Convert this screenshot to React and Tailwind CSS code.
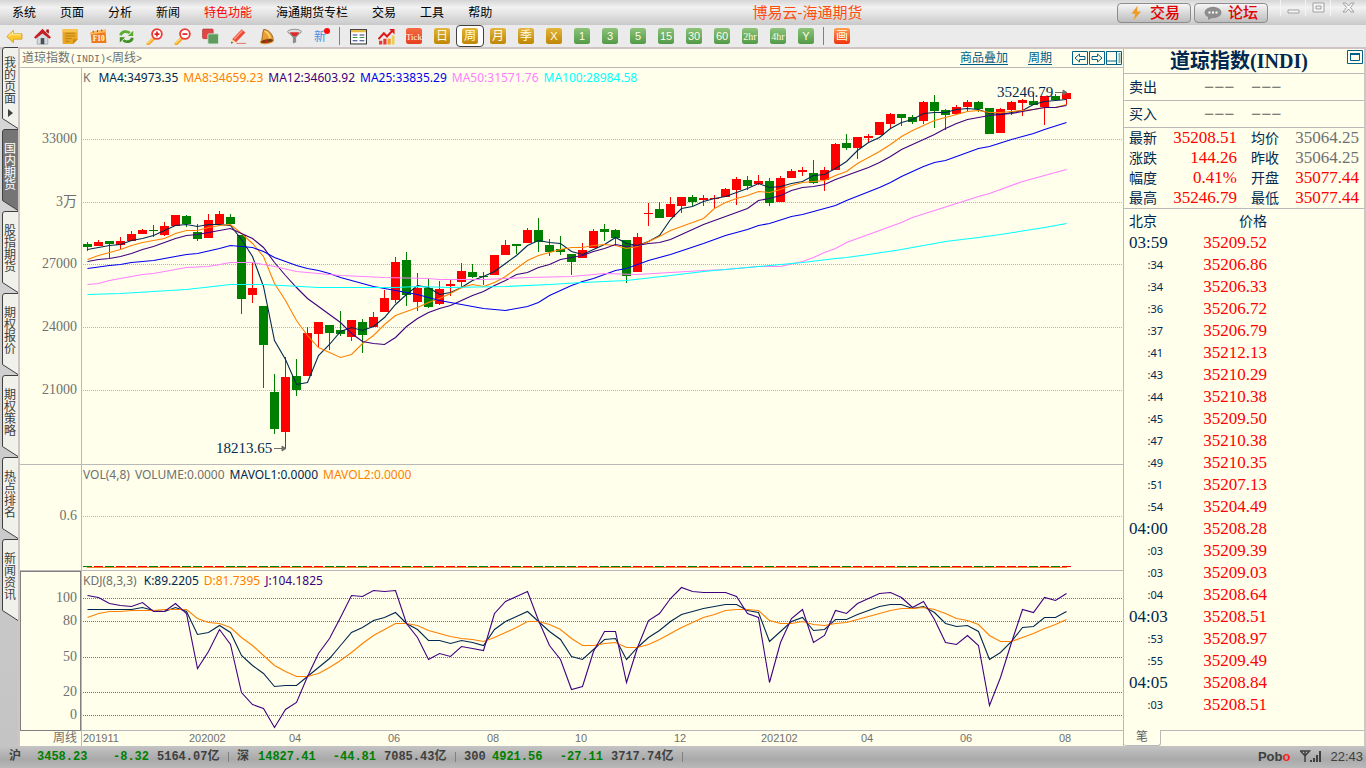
import React from "react";

const MENUS = ["系统", "页面", "分析", "新闻", "特色功能", "海通期货专栏", "交易", "工具", "帮助"];
const TABS = ["我的页面", "国内期货", "股指期货", "期权报价", "期权策略", "热点排名", "新闻资讯"];

// [up, body top, body bottom, high, low]
const CANDLES = [
  [0,244,247,242,251],[1,242,246,240,246],[0,241,244,241,258],[1,241,245,237,249],[1,234,241,231,241],
  [1,230,234,229,234],[0,230,231,225,237],[1,226,235,222,236],[1,215,226,215,226],[0,216,224,215,227],
  [0,232,239,224,241],[1,220,238,214,238],[1,214,224,211,224],[0,217,224,214,224],[0,235,299,235,314],
  [1,288,295,263,303],[0,306,345,306,388],[0,392,429,374,434],[1,377,432,357,449],[0,376,390,359,396],
  [1,333,376,327,376],[1,322,334,322,347],[0,325,333,325,350],[0,330,334,311,336],[1,320,337,320,341],
  [0,322,335,319,353],[1,317,327,312,327],[1,298,312,290,312],[1,262,300,257,303],[0,260,295,252,306],
  [1,288,302,273,311],[0,288,307,279,308],[1,289,304,281,305],[1,284,286,280,296],[1,271,282,263,287],
  [0,272,277,264,278],[0,276,277,272,285],[1,255,275,255,275],[1,245,255,240,255],[0,244,246,244,254],
  [1,230,243,228,243],[0,230,242,218,252],[0,245,252,239,256],[0,249,252,236,255],[0,254,262,254,275],
  [1,250,258,243,258],[1,231,248,229,248],[0,229,232,224,241],[0,230,238,229,245],[0,240,276,240,283],
  [1,237,272,233,272],[1,213,214,203,226],[0,209,218,202,218],[1,204,217,197,217],[1,197,206,197,213],
  [0,197,202,195,206],[1,198,200,195,206],[1,198,199,195,209],[1,189,197,188,197],[1,179,190,177,205],
  [0,180,186,176,190],[1,181,184,175,185],[0,181,203,178,206],[1,178,202,176,202],[1,171,178,169,178],
  [1,170,172,167,176],[0,173,183,160,184],[1,170,180,167,191],[1,144,170,143,170],[0,143,148,134,150],
  [1,137,148,137,159],[1,136,138,134,142],[1,122,135,122,135],[1,114,124,113,129],[0,114,118,114,126],
  [0,117,122,115,124],[1,102,121,101,124],[0,102,111,95,128],[0,110,115,109,130],[1,107,114,105,114],
  [1,102,107,100,111],[0,102,109,101,112],[0,108,134,108,134],[1,109,133,108,133],[1,102,110,101,115],
  [1,100,103,99,116],[0,101,105,95,105],[1,96,107,96,125],[0,96,100,94,100],[1,93,99,92,105],
];

const dense = (values) => values.map((y, i) => [i, y]);

const MA4 = dense([249,247,245,244,240,238,235,230,225,224,226,224,224,225,239,256,286,340,359,384,382,355,344,331,327,330,326,317,304,294,285,287,294,292,287,280,276,271,263,255,245,240,242,243,251,254,249,244,237,243,245,241,235,219,208,206,201,198,196,192,188,183,187,186,183,181,175,174,168,161,150,142,137,128,122,119,113,112,112,109,108,109,113,114,112,110,104,101,100,99]);
const MA8 = dense([259,255,252,249,245,242,240,238,233,230,230,227,225,224,233,243,256,283,300,320,335,347,352,357,354,343,335,324,315,311,307,302,298,293,287,284,286,282,276,268,260,255,252,249,247,247,245,244,245,248,246,241,236,230,226,222,218,208,202,198,195,191,192,189,185,182,181,180,175,171,163,157,151,144,136,130,125,120,117,114,111,110,112,112,111,110,109,107,107,104]);
const MA12 = dense([261,259,258,256,253,249,246,242,238,235,234,232,230,228,233,238,247,262,275,287,298,306,314,322,333,341,343,344,337,326,318,312,308,305,300,295,291,285,280,274,272,267,264,259,257,255,251,248,244,246,245,243,242,239,234,229,224,220,216,212,208,200,198,195,190,187,186,184,179,175,171,167,162,156,149,144,139,134,128,123,119,117,115,114,113,111,109,107,107,105]);
const MA25 = [[0,268],[2,265],[3,264],[4,262],[6,260],[9,254],[10,253],[12,248],[13,245],[14,246],[15,247],[16,251],[17,257],[18,261],[19,265],[20,268],[21,270],[22,273],[23,277],[25,283],[26,286],[27,288],[28,290],[29,292],[30,294],[31,297],[32,300],[34,304],[36,308],[38,310],[40,306],[41,302],[42,295],[44,285],[45,281],[46,278],[47,274],[48,270],[49,268],[51,260],[53,254],[56,243],[58,235],[60,229],[61,225],[62,223],[64,216],[65,214],[67,208],[68,205],[69,200],[72,187],[73,182],[74,176],[76,166],[77,162],[78,160],[79,156],[81,148],[82,146],[84,139],[85,136],[86,133],[87,129],[89,122]];
const MA50 = [[0,284],[1,283],[2,280],[5,274],[6,273],[9,267],[11,266],[13,262],[15,262],[17,266],[19,271],[23,275],[27,277],[31,278],[32,279],[36,279],[40,277],[44,276],[47,273],[50,274],[53,272],[56,270],[58,269],[60,267],[61,266],[63,266],[65,261],[66,257],[67,252],[68,248],[69,242],[71,234],[74,222],[75,217],[77,210],[79,203],[81,196],[82,193],[85,181],[89,169]];
const MA100 = [[0,294],[3,293],[6,291],[9,289],[13,284],[16,284],[21,287],[28,287],[30,286],[33,287],[38,286],[42,284],[45,282],[49,280],[53,275],[56,271],[60,267],[61,266],[65,262],[68,258],[69,257],[71,254],[74,249],[75,247],[78,241],[81,237],[83,234],[87,227],[89,223]];

const K_LINE = dense([609,609,609,609,609,607,610,611,607,611,634,632,625,632,655,665,673,686,685,685,676,667,658,645,632,627,620,617,612,623,629,640,640,643,640,642,645,629,621,616,611,621,631,639,656,659,649,639,638,659,647,637,630,621,614,611,608,606,604,604,610,612,641,631,621,617,630,629,619,619,614,610,606,604,604,608,606,612,623,626,625,631,659,652,641,627,626,617,617,611]);
const D_LINE = dense([617,613,611,611,610,610,610,609,609,609,618,622,623,627,637,645,655,665,671,676,676,673,667,660,652,643,635,629,623,623,625,630,633,636,638,639,641,637,632,627,621,621,624,629,638,645,645,643,642,647,647,644,639,633,627,622,617,614,610,609,609,610,620,623,623,621,624,625,623,622,619,616,613,610,608,608,607,609,613,618,620,624,635,641,641,637,633,628,624,619]);
const J_LINE = dense([595,597,603,605,606,602,611,611,603,613,668,651,629,644,692,704,708,727,709,702,676,653,638,617,595,596,590,591,590,623,637,659,653,656,646,648,650,613,601,596,591,620,645,659,689,686,651,631,631,682,647,620,613,598,587,591,592,592,592,596,613,617,682,642,618,609,642,635,610,613,603,598,593,592,597,607,601,619,642,644,635,645,705,677,642,609,612,597,600,593]);

const TICKS = [
  ["35209.52", "03:59"], ["35206.86", ":34"], ["35206.33", ":34"], ["35206.72", ":36"], ["35206.79", ":37"],
  ["35212.13", ":41"], ["35210.29", ":43"], ["35210.38", ":44"], ["35209.50", ":45"], ["35210.38", ":47"],
  ["35210.35", ":49"], ["35207.13", ":51"], ["35204.49", ":54"], ["35208.28", "04:00"], ["35209.39", ":03"],
  ["35209.03", ":03"], ["35208.64", ":04"], ["35208.51", "04:03"], ["35208.97", ":53"], ["35209.49", ":55"],
  ["35208.84", "04:05"], ["35208.51", ":03"],
];

const QUOTE = [
  ["最新", "35208.51", "均价", "35064.25", false],
  ["涨跌", "144.26", "昨收", "35064.25", false],
  ["幅度", "0.41%", "开盘", "35077.44", true],
  ["最高", "35246.79", "最低", "35077.44", true],
];

const DATES = [["201911", 83], ["202002", 189], ["04", 289], ["06", 388], ["08", 487], ["10", 575], ["12", 674], ["202102", 761], ["04", 861], ["06", 960], ["08", 1059]];

const points = (line) => line.map(([i, y]) => `${87.5 + i * 11},${y + 0.5}`).join(" ");

const Line = ({ data, color }) => (
  <polyline points={points(data)} fill="none" stroke={color} strokeWidth="1.1" />
);

const Grid = ({ ys, color }) =>
  ys.map((y) => (
    <line key={y} x1="83" x2="1123" y1={y + 0.5} y2={y + 0.5} stroke={color} strokeDasharray="1 1" shapeRendering="crispEdges" />
  ));

function Axis({ labels, top, height, boxed }) {
  return (
    <div className={boxed ? "relative border border-[#808080]" : "relative"}>
      {labels.map(([text, y]) => (
        <span
          key={text}
          className={`absolute -translate-y-1/2 font-['Liberation_Serif','Noto_Sans_CJK_SC',serif] text-sm leading-4 whitespace-nowrap text-[#707070] ${boxed ? "right-[3px]" : "right-1"}`}
          style={{ top: `${((y - top) / height) * 100}%` }}
        >
          {text}
        </span>
      ))}
    </div>
  );
}

function Legend({ items }) {
  return (
    <div className="absolute top-0.5 left-px flex gap-[5px] font-['Noto_Sans',sans-serif] text-xs leading-4 whitespace-nowrap">
      {items.map(([text, cls]) => (
        <span key={text} className={cls}>{text}</span>
      ))}
    </div>
  );
}

/* ---------- toolbar icons ---------- */
const Svg = ({ children, size = 17 }) => (
  <svg width={size} height={size} viewBox="0 0 16 16" aria-hidden="true">{children}</svg>
);

const Tile = ({ from, to, children, size = 11, family = "'Liberation Sans','Noto Sans CJK SC',sans-serif" }) => {
  const id = `g${from.slice(1)}${to.slice(1)}`;
  return (
    <svg width="18" height="18" viewBox="0 0 18 18" aria-hidden="true">
      <defs>
        <linearGradient id={id} x1="0" y1="0" x2="0" y2="1">
          <stop offset="0" stopColor={from} />
          <stop offset="1" stopColor={to} />
        </linearGradient>
      </defs>
      <rect x="1" y="1" width="16" height="16" rx="2.5" fill={`url(#${id})`} />
      <text x="9" y="13" textAnchor="middle" fontSize={size} fill="#fffbe6" fontFamily={family}>{children}</text>
    </svg>
  );
};

const NARROW = "'Liberation Sans Narrow','Liberation Serif',serif";

const Magnifier = ({ plus }) => (
  <Svg>
    <path d="M7.5 9.5 2 15" stroke="#f5a81c" strokeWidth="3" strokeLinecap="round" />
    <path d="M7 9.3 1.6 14.4" stroke="#ffe08a" strokeWidth="1" strokeLinecap="round" />
    <circle cx="10.3" cy="5.7" r="4.6" fill="#fff" stroke="#ee3b36" strokeWidth="1.7" />
    <path d={plus ? "M8 5.7h4.6M10.3 3.4V8" : "M8 5.7h4.6"} stroke="#e02020" strokeWidth="1.6" />
  </Svg>
);

const LEFT_TOOLS = [
  ["后退", <Svg><path d="M.8 8 7 2.2v3.3h8v5H7v3.3z" fill="#ffc92e" stroke="#d39a1b" strokeWidth=".8" /><path d="M2.5 7.8 6.3 4.4v2h7.8" fill="none" stroke="#fff0a8" /></Svg>],
  ["首页", <Svg><path d="M3 7.5v7.7h10V7.5L8 3z" fill="#d4dadf" stroke="#8a949d" strokeWidth=".6" /><path d="M6.3 9.5h3.4v5.7H6.3z" fill="#4a4f55" /><path d="M11.5 1.5H14v4l-2.5-2z" fill="#a81818" /><path d="M0 8.6 8 .6l8 8-1.400 1.500L8 5.200 1.400 10.100z" fill="#c51f25" /></Svg>],
  ["资讯", <Svg><path d="M1.5 1h12.2q1 0 1 1v8.5L10.5 15h-9q-1 0-1-1V2q0-1 1-1z" fill="#eaa724" /><path d="M1.5 1h12.2q1 0 1 1v2H.5V2q0-1 1-1z" fill="#f8c24c" /><path d="M3 5h9M3 7.500h9M3 10h6M3 12.500h4" stroke="#b07a14" strokeWidth=".8" /><path d="M14.7 10.5 10.5 15v-4.500z" fill="#c98414" /></Svg>],
  ["F10", <Svg><path d="M.5 4 14.5 1.5l1 12.500H1.500z" fill="#ee7a1a" /><path d="M.5 4 14.500 1.500l.2 2.400L.7 6z" fill="#ffb85c" /><path d="M3 2.500v2M7 1.800v2M11 1.300v2" stroke="#a85410" /><text x="8.200" y="12.300" textAnchor="middle" fontSize="7" fontWeight="700" fill="#fff" fontFamily="'Liberation Serif',serif">F10</text></Svg>],
  ["刷新", <Svg><path d="M2.500 7C3 3 8.500 2.300 11 4.800" fill="none" stroke="#5bad31" strokeWidth="2.600" /><path d="M14.300 2.500v5H9.300z" fill="#5bad31" /><path d="M13.500 9.200C13 13.200 7.500 13.900 5 11.400" fill="none" stroke="#3f8f22" strokeWidth="2.600" /><path d="M1.700 13.700v-5h5z" fill="#3f8f22" /></Svg>],
  ["放大", <Magnifier plus />],
  ["缩小", <Magnifier />],
  ["叠加", <Svg><rect x=".5" y="1" width="10" height="9" rx="1" fill="#e04848" stroke="#b52b2b" strokeWidth=".6" /><rect x="5.500" y="5.500" width="10" height="9.500" rx="1" fill="#5e9c5e" stroke="#d9ead9" strokeWidth=".8" /></Svg>],
  ["画线", <Svg><path d="M2 10.500 11 1.200l3.500 3L5.700 13.500z" fill="#ec4a36" /><path d="M3.300 10 11.500 1.700l1 .9L4.500 11z" fill="#ff9384" /><path d="M2 10.500 1 14.500l4.700-1z" fill="#f4d6a2" /><path d="M1 14.500l.5-1.700 1.300 1.200z" fill="#333" /><path d="M6 14.500h9" stroke="#e57b6d" /></Svg>],
  ["预警", <Svg><path d="M5.500 1.200C10 2 13.800 5 14.500 11.500l-12 2.200C4.700 10 3.800 4 5.500 1.200z" fill="#eda031" stroke="#87500d" strokeWidth=".7" /><path d="M6.200 3C9 4 11 7 11.600 11" fill="none" stroke="#ffe08c" strokeWidth="1.300" /><ellipse cx="8.500" cy="12.400" rx="6.300" ry="2.200" fill="#7a3d10" stroke="#e8a03a" strokeWidth=".9" transform="rotate(-10 8.500 12.400)" /><circle cx="8" cy="13" r="1.300" fill="#d22" /></Svg>],
  ["筛选", <Svg><path d="M1.500 3.500 6.500 9v5.500l3-1V9l5-5.500z" fill="#8c8c8c" /><ellipse cx="8" cy="3.500" rx="6.500" ry="2.300" fill="#ddd" stroke="#777" strokeWidth=".7" /><path d="M3.500 4h9L9.500 7.500h-3z" fill="#e02828" /></Svg>],
  ["新功能", <svg width="20" height="18" viewBox="0 0 20 18" aria-hidden="true"><text x="2" y="14" fontSize="12" fill="#4a90e2" fontFamily="'Noto Sans CJK SC',sans-serif">新</text><circle cx="15" cy="4" r="3" fill="#ff0a0a" /></svg>],
];

const GOLD = ["#e2b53c", "#c08604"];
const GREEN = ["#8cc47a", "#529a48"];
const PERIODS = [
  ["日", GOLD, 12], ["周", GOLD, 12], ["月", GOLD, 12], ["季", GOLD, 12], ["X", GOLD, 11],
  ["1", GREEN, 11], ["3", GREEN, 11], ["5", GREEN, 11], ["15", GREEN, 11], ["30", GREEN, 11], ["60", GREEN, 11],
  ["2hr", GREEN, 10, NARROW], ["4hr", GREEN, 10, NARROW], ["Y", GREEN, 11],
];

function Tool({ label, active, children }) {
  return (
    <button
      aria-label={label}
      className={`flex h-[22px] w-7 shrink-0 items-center justify-center rounded ${active ? "border border-[#404040] bg-white" : ""}`}
    >
      {children}
    </button>
  );
}

function Header() {
  return (
    <header>
      <div className="flex h-[25px] items-center bg-linear-to-b from-[#d6d6d6] via-[#f2f2f2] via-30% to-[#c9c9c9] pl-3">
        <nav className="flex shrink-0 gap-6 text-xs text-black">
          {MENUS.map((m) => (
            <button key={m} className={m === "特色功能" ? "text-[#ff0000]" : ""}>{m}</button>
          ))}
        </nav>
        <h1 className="flex-1 pl-1.5 text-center text-[15px] leading-5 whitespace-nowrap text-[#ff4d0d]">博易云-海通期货</h1>
        <div className="flex shrink-0 gap-[3px]">
          <button className="flex h-5 w-[74px] items-center justify-center gap-1.5 rounded border border-[#8c8c8c] bg-linear-to-b from-[#f6f6f6] to-[#bdbdbd] text-[15px] leading-4 font-medium text-[#e00000]">
            <Svg size={16}><path d="M9.500.8 3.500 8.800h3.800L5.500 15.200 13 6.500H9z" fill="#f09a22" /></Svg>
            交易
          </button>
          <button className="flex h-5 w-[74px] items-center justify-center gap-1.5 rounded border border-[#8c8c8c] bg-linear-to-b from-[#f6f6f6] to-[#bdbdbd] text-[15px] leading-4 font-medium text-[#e00000]">
            <svg width="18" height="14" viewBox="0 0 18 14" aria-hidden="true"><ellipse cx="9" cy="6.500" rx="8.500" ry="5.800" fill="#8d8d8d" /><path d="M4 10v4l5-2.500z" fill="#8d8d8d" /><path d="M4.500 6.500h2M8 6.500h2M11.500 6.500h2" stroke="#fff" strokeWidth="1.800" /></svg>
            论坛
          </button>
        </div>
        <div className="ml-3 flex h-4 shrink-0 self-start">
          {[["最小化", "M2 8h11v3H2z"], ["最大化", "M2 1h11v9H2zM5 4h5v3H5z"], ["关闭", "M2 1h3l2.500 3L10 1h3L9.500 5.500 13 10h-3L7.500 7 5 10H2l3.500-4.500z"]].map(([l, d], i) => (
            <button key={l} aria-label={l} className={`flex items-start justify-center border-l border-[#f4f4f4] pt-0.5 ${i === 2 ? "w-9" : "w-[25px]"}`}>
              <svg width="15" height="12" viewBox="0 0 15 12" aria-hidden="true"><path d={d} fill="#f6f6f6" stroke="#a0a0a0" fillRule="evenodd" /></svg>
            </button>
          ))}
        </div>
      </div>
      <div role="toolbar" aria-label="工具栏" className="flex h-6 items-center border-b-2 border-[#cfc5c5] bg-[#ebebeb]">
        {LEFT_TOOLS.map(([label, icon]) => <Tool key={label} label={label}>{icon}</Tool>)}
        <span className="mx-[3px] h-[18px] w-0.5 shrink-0 border-l border-[#808080]" />
        <Tool label="报价表">
          <Svg><rect x=".5" y="1.500" width="15" height="13.500" fill="#fff" stroke="#3a3a3a" /><path d="M1 2h14v2H1z" fill="#e8b83a" /><path d="M2.500 6.500h4.500M9 6.500h4.500" stroke="#2a3a8c" /><path d="M2.500 9h4.500M9 9h4.500" stroke="#3a9a3a" /><path d="M2.500 12h4.500M9 12h4.500" stroke="#2a3a8c" /></Svg>
        </Tool>
        <Tool label="走势图">
          <Svg><path d="M1 12h3v3.500H1zM5 10h3v5.500H5z" fill="#e83a2e" /><path d="M9 10h3v5.500H9z" fill="#f0a030" /><path d="M13 7h2.500v8.500H13z" fill="#e9cf54" /><path d="m.5 10.500 5-5.500 3 3L14 2" fill="none" stroke="#e01818" strokeWidth="2" /><path d="M10.500 1H15.500v5z" fill="#e01818" /></Svg>
        </Tool>
        <Tool label="Tick"><Tile from="#f56a42" to="#e6401f" size={9} family={NARROW}>Tick</Tile></Tool>
        {PERIODS.map(([label, [from, to], size, family]) => (
          <Tool key={label} label={label} active={label === "周"}><Tile from={from} to={to} size={size} family={family}>{label}</Tile></Tool>
        ))}
        <span className="mx-[3px] h-[18px] w-0.5 shrink-0 border-l border-[#808080]" />
        <Tool label="画"><Tile from="#ffa050" to="#ee3310" size={12}>画</Tile></Tool>
      </div>
    </header>
  );
}

function SideTabs() {
  return (
    <nav aria-label="页面" className="w-5 shrink-0 border-r-2 border-[#cfc5c5] bg-linear-to-b from-[#d8d8d8] to-[#c4c4c4] pl-0.5">
      <div className="-mt-0.5">
        {TABS.map((t, i) => (
          <button key={t} className={`relative flex h-[82px] w-4 flex-col items-center text-xs leading-3 ${i === 0 ? "pt-2.5 text-[#404040]" : i === 1 ? "pt-3.5 text-white" : "pt-3.5 text-[#404040]"}`}>
            <svg className="absolute inset-0" width="16" height="82" viewBox="0 0 16 82" aria-hidden="true">
              <path d="M16 .5H3Q.5.5.5 3V71.500L16 81.500" fill={i === 1 ? "#757575" : "#f1f1ec"} stroke="#404040" />
            </svg>
            <span className="relative flex w-3 flex-col break-all">{t}</span>
            {i === 0 && <svg className="relative mt-1" width="5" height="8" viewBox="0 0 5 8" aria-hidden="true"><path d="M0 0 5 4 0 8z" fill="#404040" /></svg>}
          </button>
        ))}
      </div>
    </nav>
  );
}

const Arrow = ({ x, y }) => (
  <path d={`M${x} ${y + 0.5}h8m0-2.500 4 2.500-4 2.500z`} stroke="#707070" fill="#707070" />
);

function Chart() {
  const plot = "relative min-h-0 min-w-0 overflow-hidden border-l border-[#b9b9b9]";
  const svg = "absolute inset-0 size-full";
  return (
    <section className="flex min-w-0 flex-1 flex-col border-r border-[#b9b9b9]">
      <div className="flex h-[19px] items-center border-b border-[#b9b9b9] pl-0.5 text-xs text-[#707070]">
        <h2 className="flex-1 whitespace-nowrap">
          道琼指数<span className="font-['Liberation_Mono',monospace] text-[10px]">(INDI)&lt;</span>周线<span className="font-['Liberation_Mono',monospace] text-[10px]">&gt;</span>
        </h2>
        <a href="#overlay" className="mr-5 text-[#00608a] underline underline-offset-2">商品叠加</a>
        <a href="#period" className="mr-5 text-[#00608a] underline underline-offset-2">周期</a>
        {[["前移", "M3 7 7.500 3v2.500H13v3H7.500V11z"], ["后移", "M13 7 8.500 3v2.500H3v3h5.500V11z"], ["分屏", "M.5 10h10M10.500.5v13M12.500 3h2M12.500 5h2M12.500 7h2M12.500 9h2M12.500 11h2"]].map(([l, d]) => (
          <button key={l} aria-label={l} className="mr-px">
            <svg width="16" height="14" viewBox="0 0 16 14" aria-hidden="true"><path d="M.5.5h15v13H.5z" fill="none" stroke="#00608a" /><path d={d} fill="none" stroke="#00608a" /></svg>
          </button>
        ))}
      </div>

      <div className="grid min-h-0 flex-1 grid-cols-[61px_minmax(0,1fr)] grid-rows-[397fr_106fr_160fr]">
        <div className="grid border-b border-[#b9b9b9]">
          <Axis top={68} height={396} labels={[["33000", 139], ["3万", 202], ["27000", 264], ["24000", 327], ["21000", 390]]} />
        </div>
        <div className={`${plot} border-b`}>
          <svg className={svg} viewBox="82 68 1041 396" preserveAspectRatio="none" role="img" aria-label="K线图">
            <Grid ys={[139, 202, 264, 327, 390]} color="#b4b4ac" />
            {CANDLES.map(([up, top, bottom, high, low], i) => (
              <g key={i} fill={up ? "#ff0000" : "#008000"} shapeRendering="crispEdges">
                <rect x={87 + i * 11} y={high} width="1" height={low - high} />
                <rect x={83 + i * 11} y={top} width="9" height={bottom - top} />
              </g>
            ))}
            <Line data={MA4} color="#002850" />
            <Line data={MA8} color="#ff8000" />
            <Line data={MA12} color="#400080" />
            <Line data={MA25} color="#0000f0" />
            <Line data={MA50} color="#ff80ff" />
            <Line data={MA100} color="#00ffff" />
            <g fontFamily="'Liberation Serif',serif" fontSize="15" fill="#002850">
              <text x="997" y="97">35246.79</text>
              <text x="216" y="453">18213.65</text>
            </g>
            <Arrow x={1055} y={92} />
            <Arrow x={274} y={448} />
          </svg>
          <Legend items={[["K", "mr-[3px] text-[#707070]"], ["MA4:34973.35", "text-[#002850]"], ["MA8:34659.23", "text-[#ff8000]"], ["MA12:34603.92", "text-[#400080]"], ["MA25:33835.29", "text-[#0000f0]"], ["MA50:31571.76", "text-[#ff80ff]"], ["MA100:28984.58", "text-[#00ffff]"]]} />
        </div>

        <div className="grid border-b border-[#b9b9b9]">
          <Axis top={465} height={105} labels={[["0.6", 516]]} />
        </div>
        <div className={`${plot} border-b`}>
          <svg className={svg} viewBox="82 465 1041 105" preserveAspectRatio="none" role="img" aria-label="成交量">
            <Grid ys={[516]} color="#b4b4ac" />
            {CANDLES.map(([up], i) => (
              <rect key={i} x={83 + i * 11} y="566" width="9" height="1" fill={up ? "#ff0000" : "#008000"} shapeRendering="crispEdges" />
            ))}
            <path d="M87 567.500H1067" stroke="#f08030" shapeRendering="crispEdges" />
          </svg>
          <Legend items={[["VOL(4,8)", "text-[#707070]"], ["VOLUME:0.0000", "text-[#707070]"], ["MAVOL1:0.0000", "text-[#002850]"], ["MAVOL2:0.0000", "text-[#ff8000]"]]} />
        </div>

        <Axis boxed top={572} height={158} labels={[["100", 598], ["80", 621], ["50", 657], ["20", 692], ["0", 715]]} />
        <div className={`${plot} border-b`}>
          <svg className={svg} viewBox="82 571 1041 159" preserveAspectRatio="none" role="img" aria-label="KDJ">
            <Grid ys={[598, 621, 657, 692, 715]} color="#77776f" />
            <Line data={K_LINE} color="#002850" />
            <Line data={D_LINE} color="#ff8000" />
            <Line data={J_LINE} color="#400080" />
          </svg>
          <Legend items={[["KDJ(8,3,3)", "mr-0.5 text-[#707070]"], ["K:89.2205", "text-[#002850]"], ["D:81.7395", "text-[#ff8000]"], ["J:104.1825", "text-[#400080]"]]} />
        </div>
      </div>

      <div className="flex h-[15px] text-[#707070]">
        <div className="w-[61px] pr-1 text-right text-xs leading-[15px]">周线</div>
        <div className="relative flex-1 overflow-hidden border-l border-[#b9b9b9] font-['Liberation_Sans',sans-serif] text-[11px] leading-[15px]">
          {DATES.map(([text, x]) => (
            <span key={x} className="absolute top-0" style={{ left: `${((x - 82) / 1041) * 100}%` }}>{text}</span>
          ))}
        </div>
      </div>
    </section>
  );
}

function QuotePanel() {
  const num = "font-['Liberation_Serif',serif] text-[17px]";
  return (
    <aside className="flex w-[242px] shrink-0 flex-col border-r-2 border-[#cfc5c5] text-sm text-[#002850]">
      <div className="relative h-[25px] shrink-0 border-b border-[#b9b9b9] text-center">
        <h2 className="pr-2.5 font-['Liberation_Serif','Noto_Sans_CJK_SC',serif] text-xl leading-6 font-bold">道琼指数(INDI)</h2>
        <button aria-label="最大化面板" className="absolute top-px right-px">
          <svg className="block" width="16" height="14" viewBox="0 0 16 14" aria-hidden="true"><path d="M.5.5h15v13H.5z" fill="none" stroke="#00608a" /><path d="M3.500 3.500h9v7h-9z" fill="none" stroke="#00608a" /><path d="M3 4h10" stroke="#00608a" strokeWidth="2" /></svg>
        </button>
      </div>
      {["卖出", "买入"].map((label) => (
        <div key={label} className="flex h-[27px] shrink-0 items-center border-b border-[#b9b9b9] pl-[5px]">
          <span className="w-[75px]">{label}</span>
          <span className="w-[47px] font-['Liberation_Serif',serif] text-lg leading-5 text-[#606060]">−−−</span>
          <span className="font-['Liberation_Serif',serif] text-lg leading-5 text-[#606060]">−−−</span>
        </div>
      ))}
      <table className="w-full shrink-0 border-b border-[#b9b9b9]">
        <tbody>
          {QUOTE.map(([a, av, b, bv, red]) => (
            <tr key={a} className="h-5 leading-5">
              <th className="w-[33px] p-0 pl-[5px] text-left font-normal">{a}</th>
              <td className={`w-20 p-0 text-right text-[#ff0000] ${num}`}>{av}</td>
              <th className="p-0 pl-[14px] text-left font-normal">{b}</th>
              <td className={`p-0 pr-[5px] text-right ${num} ${red ? "text-[#ff0000]" : "text-[#707070]"}`}>{bv}</td>
            </tr>
          ))}
        </tbody>
      </table>
      <div className="min-h-0 flex-1 overflow-hidden">
        <table>
          <thead>
            <tr className="h-[23px] leading-[22px]">
              <th className="w-12 p-0 pl-[5px] text-left font-normal">北京</th>
              <th className="w-[95px] p-0 text-right font-normal">价格</th>
            </tr>
          </thead>
          <tbody>
            {TICKS.map(([price, time], i) => (
              <tr key={i} className="h-[22px] leading-[22px]">
                <td className={time.length > 3 ? `p-0 pl-[5px] ${num}` : "p-0 pr-[9px] text-right font-['Noto_Sans',sans-serif] text-[11px]"}>{time}</td>
                <td className={`p-0 text-right text-[#ff0000] ${num}`}>{price}</td>
              </tr>
            ))}
          </tbody>
        </table>
      </div>
      <div className="flex h-4 shrink-0">
        <button className="w-[37px] rounded-b-[3px] border-r border-b border-[#b9b9b9] text-xs leading-[15px] text-[#606060]">笔</button>
        <div className="flex-1 border-t border-[#b9b9b9]" />
      </div>
    </aside>
  );
}

const INDICES = [
  ["沪", "w-7", "3458.23", "w-[50px]", "-8.32", "5164.07亿"],
  ["深", "w-[21px]", "14827.41", "w-[56px]", "-44.81", "7085.43亿"],
  ["300", "w-7", "4921.56", "w-[49px]", "-27.11", "3717.74亿"],
];

function StatusBar() {
  return (
    <footer className="flex h-[22px] shrink-0 items-center bg-linear-to-b from-[#c4c4c4] via-[#a9a9a9] via-60% to-[#b9b9b9] pl-[9px] font-['Liberation_Mono','Noto_Sans_CJK_SC',monospace] text-xs font-bold whitespace-nowrap text-[#404040]">
      {INDICES.map(([name, nameW, value, valueW, change, volume]) => (
        <div key={name} className="flex items-center">
          <span className={nameW}>{name}</span>
          <span className={`text-[#008000] ${valueW}`}>{value}</span>
          <span className="w-[62px] text-right text-[#008000]">{change}</span>
          <span className="ml-2 w-[63px]">{volume}</span>
          <span className="mx-2 h-2.5 w-px bg-[#808080]" />
        </div>
      ))}
      <div className="flex flex-1 items-center justify-end pr-[3px] font-['Liberation_Sans',sans-serif] text-[13px]">
        <span>Pob<span className="text-[#ff2020]">o</span></span>
        <svg className="mr-2 ml-2.5" width="22" height="13" viewBox="0 0 22 13" aria-hidden="true"><path d="M.5 1h9L5 6zM5 1v11" fill="none" stroke="#404040" strokeWidth="1.500" /><path d="M10 10h2v2h-2zM13 8h2v4h-2zM16 5h2v7h-2zM19 1h2v11h-2z" fill="#404040" /></svg>
        <span className="font-normal">22:43</span>
      </div>
    </footer>
  );
}

export default function App() {
  return (
    <div className="flex h-screen flex-col overflow-hidden bg-[#ffffeb] font-['Liberation_Sans','Noto_Sans_CJK_SC',sans-serif]">
      <Header />
      <main className="flex min-h-0 flex-1">
        <SideTabs />
        <Chart />
        <QuotePanel />
      </main>
      <StatusBar />
    </div>
  );
}
